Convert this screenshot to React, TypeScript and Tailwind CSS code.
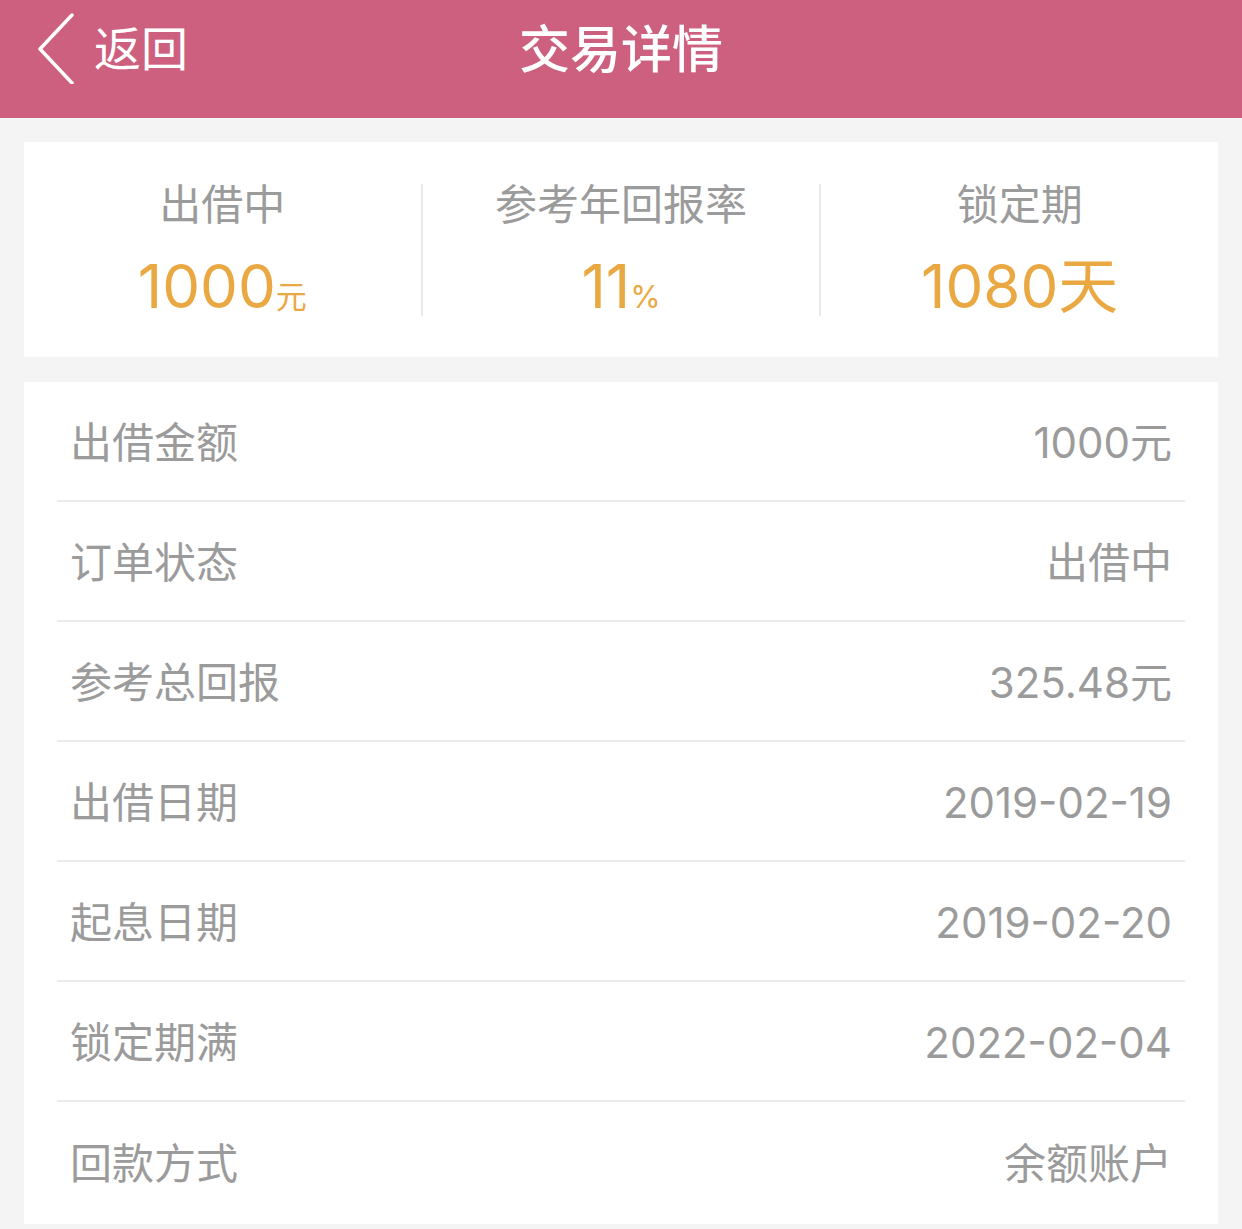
import { ReactNode } from "react";

const font = { fontFamily: 'Inter, "Noto Sans CJK SC", "Noto Sans", sans-serif' };

const rows: [string, string][] = [
  ["出借金额", "1000元"],
  ["订单状态", "出借中"],
  ["参考总回报", "325.48元"],
  ["出借日期", "2019-02-19"],
  ["起息日期", "2019-02-20"],
  ["锁定期满", "2022-02-04"],
  ["回款方式", "余额账户"],
];

const Stat = ({ label, children, last }: { label: string; children: ReactNode; last?: boolean }) => (
  <div className={`flex-1 flex flex-col items-center gap-[30px] ${last ? "" : "border-r-2 border-[#e8e8e8]"}`}>
    <div className="text-[42px] leading-[42px] text-[#9b9b9b]">{label}</div>
    <div className="h-[60px] leading-[60px] text-[60px] text-[#eaa843] flex items-baseline">{children}</div>
  </div>
);

const App = () => {
  return (
    <main className="min-h-[1229px] w-full bg-[#f4f4f4]" style={font}>
      <header className="relative h-[118px] bg-[#cd607e] flex items-center justify-center pb-[20px]">
        <div className="absolute left-0 top-0 h-full flex items-center pl-[36px] gap-[18px] pb-[22px]">
          <svg width="40" height="72" viewBox="0 0 40 72" fill="none">
            <polyline points="36,3 4,37 36,71" stroke="#ffffff" strokeWidth="3.5" strokeLinecap="round" strokeLinejoin="round" />
          </svg>
          <span className="text-[47px] leading-none text-white">返回</span>
        </div>
        <h1 className="text-[51px] leading-none font-medium text-white">交易详情</h1>
      </header>

      <section className="mx-[24px] mt-[24px] bg-white h-[215px] flex items-center">
        <div className="flex w-full">
          <Stat label="出借中">
            <span>1000</span>
            <span className="text-[31px]">元</span>
          </Stat>
          <Stat label="参考年回报率">
            <span>11</span>
            <span className="text-[31px]">%</span>
          </Stat>
          <Stat label="锁定期" last>
            <span>1080天</span>
          </Stat>
        </div>
      </section>

      <section className="mx-[24px] mt-[25px] bg-white pb-[2px]">
        {rows.map(([label, value], i) => (
          <div
            key={label}
            className={`mx-[33px] h-[120px] pt-[3px] px-[13px] flex items-center justify-between text-[42px] leading-none text-[#9b9b9b] ${
              i < rows.length - 1 ? "border-b-2 border-[#ebebeb]" : ""
            }`}
          >
            <span>{label}</span>
            <span>{value}</span>
          </div>
        ))}
      </section>
    </main>
  );
};

export default App;
